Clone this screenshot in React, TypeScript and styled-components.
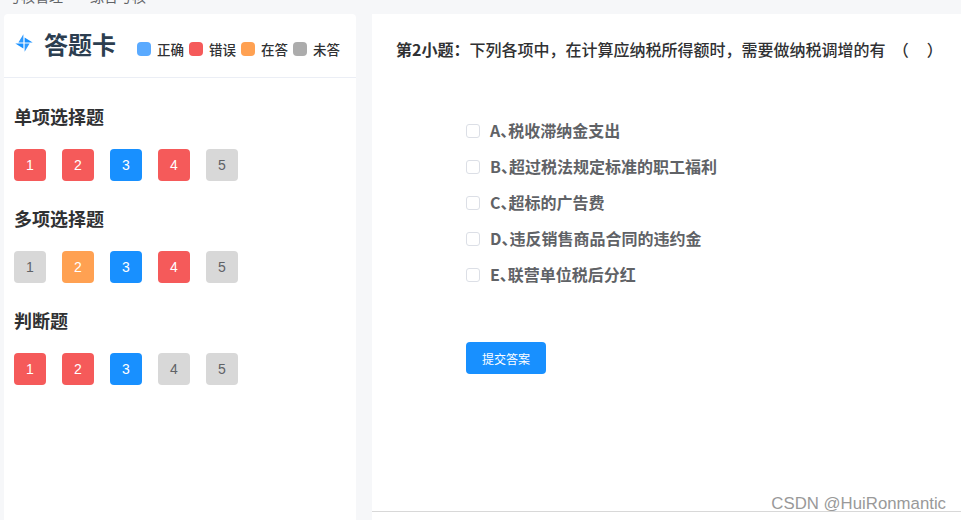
import React from 'react';
import styled, { createGlobalStyle } from 'styled-components';

type Status = 'right' | 'wrong' | 'doing' | 'todo';

const statusColors: Record<Status, string> = {
  right: '#1890ff',
  wrong: '#f55a5a',
  doing: '#ffa152',
  todo: '#d8d8d8',
};

const legend = [
  { label: '正确', color: '#5aaaff' },
  { label: '错误', color: '#f55a5a' },
  { label: '在答', color: '#ffa152' },
  { label: '未答', color: '#acacac' },
];

const sections: { title: string; items: Status[] }[] = [
  { title: '单项选择题', items: ['wrong', 'wrong', 'right', 'wrong', 'todo'] },
  { title: '多项选择题', items: ['todo', 'doing', 'right', 'wrong', 'todo'] },
  { title: '判断题', items: ['wrong', 'wrong', 'right', 'todo', 'todo'] },
];

const options = [
  { letter: 'A', text: '税收滞纳金支出' },
  { letter: 'B', text: '超过税法规定标准的职工福利' },
  { letter: 'C', text: '超标的广告费' },
  { letter: 'D', text: '违反销售商品合同的违约金' },
  { letter: 'E', text: '联营单位税后分红' },
];

const App = () => (
  <>
    <GlobalStyle />
    <Page>
      <Crumbs>
        <span>考核管理</span>
        <span>综合考核</span>
      </Crumbs>
      <Main>
        <Sidebar>
          <CardHeader>
            <LogoIcon width="18" height="18" viewBox="0 0 18 18">
              <path d="M8.4 0.3 V8.4 H3.4 Z" fill="#2f9bff" />
              <path d="M9.6 3.4 L17.7 8.4 H9.6 Z" fill="#1890ff" />
              <path d="M9.6 17.7 V9.6 H14.6 Z" fill="#2f9bff" />
              <path d="M8.4 14.6 L0.3 9.6 H8.4 Z" fill="#1890ff" />
            </LogoIcon>
            <CardTitle>答题卡</CardTitle>
            <Legend>
              {legend.map((item) => (
                <LegendItem key={item.label}>
                  <LegendDot color={item.color} />
                  {item.label}
                </LegendItem>
              ))}
            </Legend>
          </CardHeader>
          <Sections>
            {sections.map((section) => (
              <div key={section.title}>
                <SectionTitle>{section.title}</SectionTitle>
                <NumberRow>
                  {section.items.map((status, index) => (
                    <NumberButton key={index} status={status}>
                      {index + 1}
                    </NumberButton>
                  ))}
                </NumberRow>
              </div>
            ))}
          </Sections>
        </Sidebar>
        <Content>
          <QuestionPane>
            <Question>
              <b>第2小题：</b>下列各项中，在计算应纳税所得额时，需要做纳税调增的有 &nbsp;（&nbsp;&nbsp;&nbsp;&nbsp;&nbsp;）
            </Question>
            <OptionList>
              {options.map((option) => (
                <OptionRow key={option.letter}>
                  <Checkbox type="checkbox" />
                  <OptionText>
                    {option.letter}、{option.text}
                  </OptionText>
                </OptionRow>
              ))}
            </OptionList>
            <SubmitButton>提交答案</SubmitButton>
          </QuestionPane>
        </Content>
      </Main>
      <Watermark>CSDN @HuiRonmantic</Watermark>
    </Page>
  </>
);

export default App;

const GlobalStyle = createGlobalStyle`
  html, body {
    margin: 0;
    padding: 0;
    background: #f6f7f9;
  }
  * {
    box-sizing: border-box;
  }
`;

const Page = styled.div`
  position: relative;
  width: 961px;
  height: 520px;
  overflow: hidden;
  font-family: "Noto Sans CJK SC", "Liberation Sans", sans-serif;
`;

const Crumbs = styled.div`
  display: flex;
  gap: 27px;
  height: 14px;
  padding-left: 7px;
  font-size: 14px;
  line-height: 14px;
  color: #606266;

  span {
    margin-top: -11px;
  }
`;

const Main = styled.div`
  display: flex;
  gap: 16px;
  padding-left: 4px;
`;

const Sidebar = styled.aside`
  width: 352px;
  height: 506px;
  background: #fff;
  border-radius: 4px 4px 0 0;
`;

const CardHeader = styled.header`
  display: flex;
  align-items: center;
  height: 64px;
  padding-left: 11px;
  border-bottom: 1px solid #ebeef5;
`;

const LogoIcon = styled.svg`
  margin-top: -5px;
`;

const CardTitle = styled.h1`
  margin: -4px 0 0 11px;
  font-size: 24px;
  font-weight: 700;
  line-height: 32px;
  color: #2c3e50;
`;

const Legend = styled.div`
  display: flex;
  gap: 5px;
  margin: 7px 0 0 21px;
`;

const LegendItem = styled.span`
  display: flex;
  align-items: center;
  gap: 6px;
  font-size: 13.5px;
  font-weight: 500;
  line-height: 14px;
  color: #303133;
`;

const LegendDot = styled.i<{ color: string }>`
  width: 14px;
  height: 14px;
  border-radius: 4px;
  background: ${({ color }) => color};
`;

const Sections = styled.div`
  display: flex;
  flex-direction: column;
  gap: 24px;
  padding: 25px 10px 0;
`;

const SectionTitle = styled.h2`
  margin: 0 0 20px;
  font-size: 18px;
  font-weight: 700;
  line-height: 26px;
  color: #303133;
`;

const NumberRow = styled.div`
  display: flex;
  gap: 16px;
`;

const NumberButton = styled.div<{ status: Status }>`
  display: flex;
  align-items: center;
  justify-content: center;
  width: 32px;
  height: 32px;
  border-radius: 4px;
  font-family: "Liberation Sans", sans-serif;
  font-size: 14px;
  background: ${({ status }) => statusColors[status]};
  color: ${({ status }) => (status === 'todo' ? '#606266' : '#fff')};
`;

const Content = styled.main`
  flex: 1;
  height: 506px;
  background: #fff;
`;

const QuestionPane = styled.div`
  height: 498px;
  padding: 23px 0 0 24px;
  border-bottom: 1px solid #d8d8d8;
`;

const Question = styled.div`
  font-size: 16px;
  font-weight: 500;
  line-height: 24px;
  white-space: nowrap;
  color: #303133;

  b {
    font-weight: 700;
  }
`;

const OptionList = styled.div`
  display: flex;
  flex-direction: column;
  gap: 12px;
  margin: 57px 0 0 70px;
`;

const OptionRow = styled.label`
  display: flex;
  align-items: center;
  height: 24px;
  font-size: 16px;
  font-weight: 700;
  color: #606266;
`;

const OptionText = styled.span`
  font-feature-settings: "halt";
`;

const Checkbox = styled.input`
  appearance: none;
  width: 14px;
  height: 14px;
  margin: 2px 10px 0 0;
  border: 1px solid #dcdfe6;
  border-radius: 3px;
  background: #fff;
`;

const SubmitButton = styled.button`
  display: block;
  width: 80px;
  height: 32px;
  margin: 56px 0 0 70px;
  padding: 0;
  border: 0;
  border-radius: 4px;
  background: #1890ff;
  color: #fff;
  font-family: inherit;
  font-size: 12px;
`;

const Watermark = styled.div`
  position: absolute;
  right: 15px;
  bottom: 7px;
  font-family: "Liberation Sans", sans-serif;
  font-size: 16.8px;
  line-height: 18px;
  color: #999;
`;
